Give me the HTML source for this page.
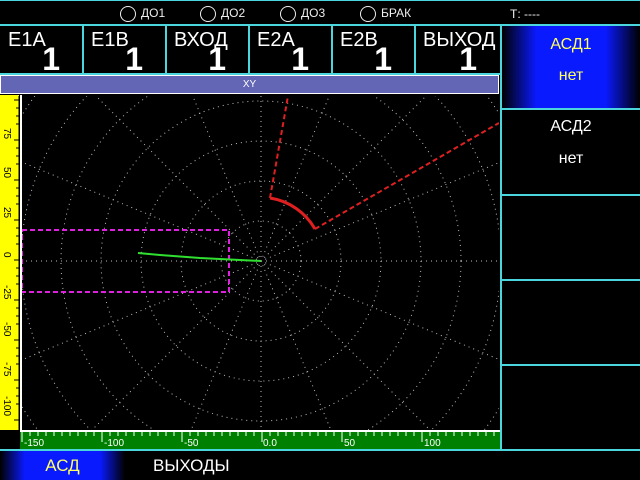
<!DOCTYPE html>
<html><head><meta charset="utf-8"><style>
*{margin:0;padding:0;box-sizing:border-box}
html,body{width:640px;height:480px;overflow:hidden}
body{background:#000;position:relative;font-family:"Liberation Sans","DejaVu Sans",sans-serif;color:#fff}
.a{position:absolute}
.hl{position:absolute;height:2px;background:#4ad6dc}
.vl{position:absolute;width:2px;background:#4ad6dc}
.cell{position:absolute;top:26px;height:47px;overflow:hidden}
.cell .t{position:absolute;left:8px;top:3px;font-size:20px;line-height:22px}
.cell .n{position:absolute;right:23px;top:18px;font-size:32px;line-height:30px;font-weight:bold}
.top{position:absolute;top:5px;font-size:12px;color:#eee;line-height:16px}
.circ{display:inline-block;width:16px;height:16px;border:1.5px solid #eee;border-radius:50%;vertical-align:middle;margin-right:5px}
</style></head><body>
<div class="hl" style="left:0;top:0;width:640px;height:1px"></div>
<div class="top" style="left:120px"><span class="circ"></span>ДО1</div>
<div class="top" style="left:200px"><span class="circ"></span>ДО2</div>
<div class="top" style="left:280px"><span class="circ"></span>ДО3</div>
<div class="top" style="left:360px"><span class="circ"></span>БРАК</div>
<div class="top" style="left:510px;top:6px">Т: ----</div>
<div class="hl" style="left:0;top:24px;width:640px"></div>

<div class="cell" style="left:0;width:83px"><span class="t">E1A</span><span class="n">1</span></div>
<div class="cell" style="left:83px;width:83px"><span class="t">E1B</span><span class="n">1</span></div>
<div class="cell" style="left:166px;width:83px"><span class="t">ВХОД</span><span class="n">1</span></div>
<div class="cell" style="left:249px;width:83px"><span class="t">E2A</span><span class="n">1</span></div>
<div class="cell" style="left:332px;width:83px"><span class="t">E2B</span><span class="n">1</span></div>
<div class="cell" style="left:415px;width:85px"><span class="t">ВЫХОД</span><span class="n">1</span></div>
<div class="vl" style="left:82px;top:25px;height:49px"></div>
<div class="vl" style="left:165px;top:25px;height:49px"></div>
<div class="vl" style="left:248px;top:25px;height:49px"></div>
<div class="vl" style="left:331px;top:25px;height:49px"></div>
<div class="vl" style="left:414px;top:25px;height:49px"></div>
<div class="hl" style="left:0;top:73px;width:500px"></div>
<div class="a" style="left:0;top:75px;width:499px;height:19px;background:#6365b5;border:1px solid #fff;font-size:10px;text-align:center;line-height:17px">XY</div>

<div class="vl" style="left:500px;top:24px;height:427px"></div>
<div class="a" style="left:502px;top:26px;width:138px;height:82px;background:linear-gradient(90deg,#000 0%,#0a1aff 25%,#0a1aff 75%,#000 100%);text-align:center;color:#ffff60;font-size:16px;line-height:18px"><div style="margin-top:10px">АСД1</div><div style="margin-top:13px">нет</div></div>
<div class="hl" style="left:502px;top:108px;width:138px"></div>
<div class="a" style="left:502px;top:110px;width:138px;text-align:center;font-size:16px;line-height:18px"><div style="margin-top:8px">АСД2</div><div style="margin-top:14px">нет</div></div>
<div class="hl" style="left:502px;top:194px;width:138px"></div>
<div class="hl" style="left:502px;top:279px;width:138px"></div>
<div class="hl" style="left:502px;top:364px;width:138px"></div>
<div class="hl" style="left:0;top:449px;width:640px"></div>

<svg class="a" style="left:0;top:94px" width="500" height="356" viewBox="0 94 500 356">
<defs><clipPath id="c"><rect x="22" y="96" width="477" height="334"/></clipPath></defs>
<rect x="20" y="95" width="480" height="336" fill="#000"/>
<line x1="21" y1="95" x2="21" y2="430" stroke="#fff" stroke-width="2"/>
<g clip-path="url(#c)" stroke="#bbb" stroke-width="1" stroke-dasharray="1 4" fill="none">
<circle cx="261" cy="261" r="40"/><circle cx="261" cy="261" r="80"/><circle cx="261" cy="261" r="120"/><circle cx="261" cy="261" r="160"/><circle cx="261" cy="261" r="200"/><circle cx="261" cy="261" r="240"/><circle cx="261" cy="261" r="280"/><circle cx="261" cy="261" r="320"/>
<line x1="-139" y1="261" x2="661" y2="261"/><line x1="261" y1="-139" x2="261" y2="661"/>
<line x1="-109" y1="108" x2="631" y2="414"/><line x1="-109" y1="414" x2="631" y2="108"/>
<line x1="-22" y1="-22" x2="544" y2="544"/><line x1="-22" y1="544" x2="544" y2="-22"/>
<line x1="108" y1="-109" x2="414" y2="631"/><line x1="108" y1="631" x2="414" y2="-109"/>
</g>
<g clip-path="url(#c)" fill="none">
<rect x="22" y="230" width="207" height="62" stroke="#e020e0" stroke-width="2" stroke-dasharray="5 3"/>
<polyline points="138,253 160,255 200,258 240,260 261,261" stroke="#30e030" stroke-width="2"/>
<line x1="270" y1="198" x2="288" y2="96" stroke="#e02020" stroke-width="2" stroke-dasharray="5 3"/>
<line x1="315" y1="229" x2="499" y2="123" stroke="#e02020" stroke-width="2" stroke-dasharray="5 3"/>
<path d="M270 198 A63 63 0 0 1 315 229" stroke="#e02020" stroke-width="3"/>
</g>
<rect x="0" y="95" width="19" height="335" fill="#ffff00"/>
<line x1="19" y1="96" x2="19" y2="430" stroke="#000"/>
<g font-size="10" fill="#000" font-family="Liberation Sans,sans-serif">
<text transform="translate(4,128) rotate(90)">75</text>
<text transform="translate(4,167) rotate(90)">50</text>
<text transform="translate(4,207) rotate(90)">25</text>
<text transform="translate(4,252) rotate(90)">0</text>
<text transform="translate(4,285) rotate(90)">-25</text>
<text transform="translate(4,322) rotate(90)">-50</text>
<text transform="translate(4,362) rotate(90)">-75</text>
<text transform="translate(4,396) rotate(90)">-100</text>
</g>
<path stroke="#000" d="M14 100h5M16 108h3M16 116h3M16 124h3M14 140h5M16 148h3M16 156h3M16 164h3M14 180h5M16 188h3M16 196h3M16 204h3M14 220h5M16 228h3M16 236h3M16 244h3M14 260h5M16 268h3M16 276h3M16 284h3M14 300h5M16 308h3M16 316h3M16 324h3M14 340h5M16 348h3M16 356h3M16 364h3M14 380h5M16 388h3M16 396h3M16 404h3M14 420h5"/>
<rect x="20" y="431" width="480" height="18" fill="#008000"/>
<line x1="20" y1="431" x2="500" y2="431" stroke="#fff" stroke-width="2"/>
<path stroke="#fff" d="M22 432v10M30 432v4M38 432v4M46 432v4M54 432v4M62 432v4M70 432v4M78 432v4M86 432v4M94 432v4M102 432v10M110 432v4M118 432v4M126 432v4M134 432v4M142 432v4M150 432v4M158 432v4M166 432v4M174 432v4M182 432v10M190 432v4M198 432v4M206 432v4M214 432v4M222 432v4M230 432v4M238 432v4M246 432v4M254 432v4M262 432v10M270 432v4M278 432v4M286 432v4M294 432v4M302 432v4M310 432v4M318 432v4M326 432v4M334 432v4M342 432v10M350 432v4M358 432v4M366 432v4M374 432v4M382 432v4M390 432v4M398 432v4M406 432v4M414 432v4M422 432v10M430 432v4M438 432v4M446 432v4M454 432v4M462 432v4M470 432v4M478 432v4M486 432v4M494 432v4"/>
<g font-size="10" fill="#fff" font-family="Liberation Sans,sans-serif">
<text x="24" y="446">-150</text><text x="104" y="446">-100</text><text x="184" y="446">-50</text><text x="263" y="446">0.0</text><text x="344" y="446">50</text><text x="424" y="446">100</text>
</g>
</svg>

<div class="a" style="left:0;top:451px;width:125px;height:29px;background:linear-gradient(90deg,#000 0%,#0a1aff 20%,#0a1aff 80%,#000 100%);color:#ffff60;font-size:17px;text-align:center;line-height:29px">АСД</div>
<div class="a" style="left:153px;top:451px;font-size:17px;line-height:29px">ВЫХОДЫ</div>
</body></html>
